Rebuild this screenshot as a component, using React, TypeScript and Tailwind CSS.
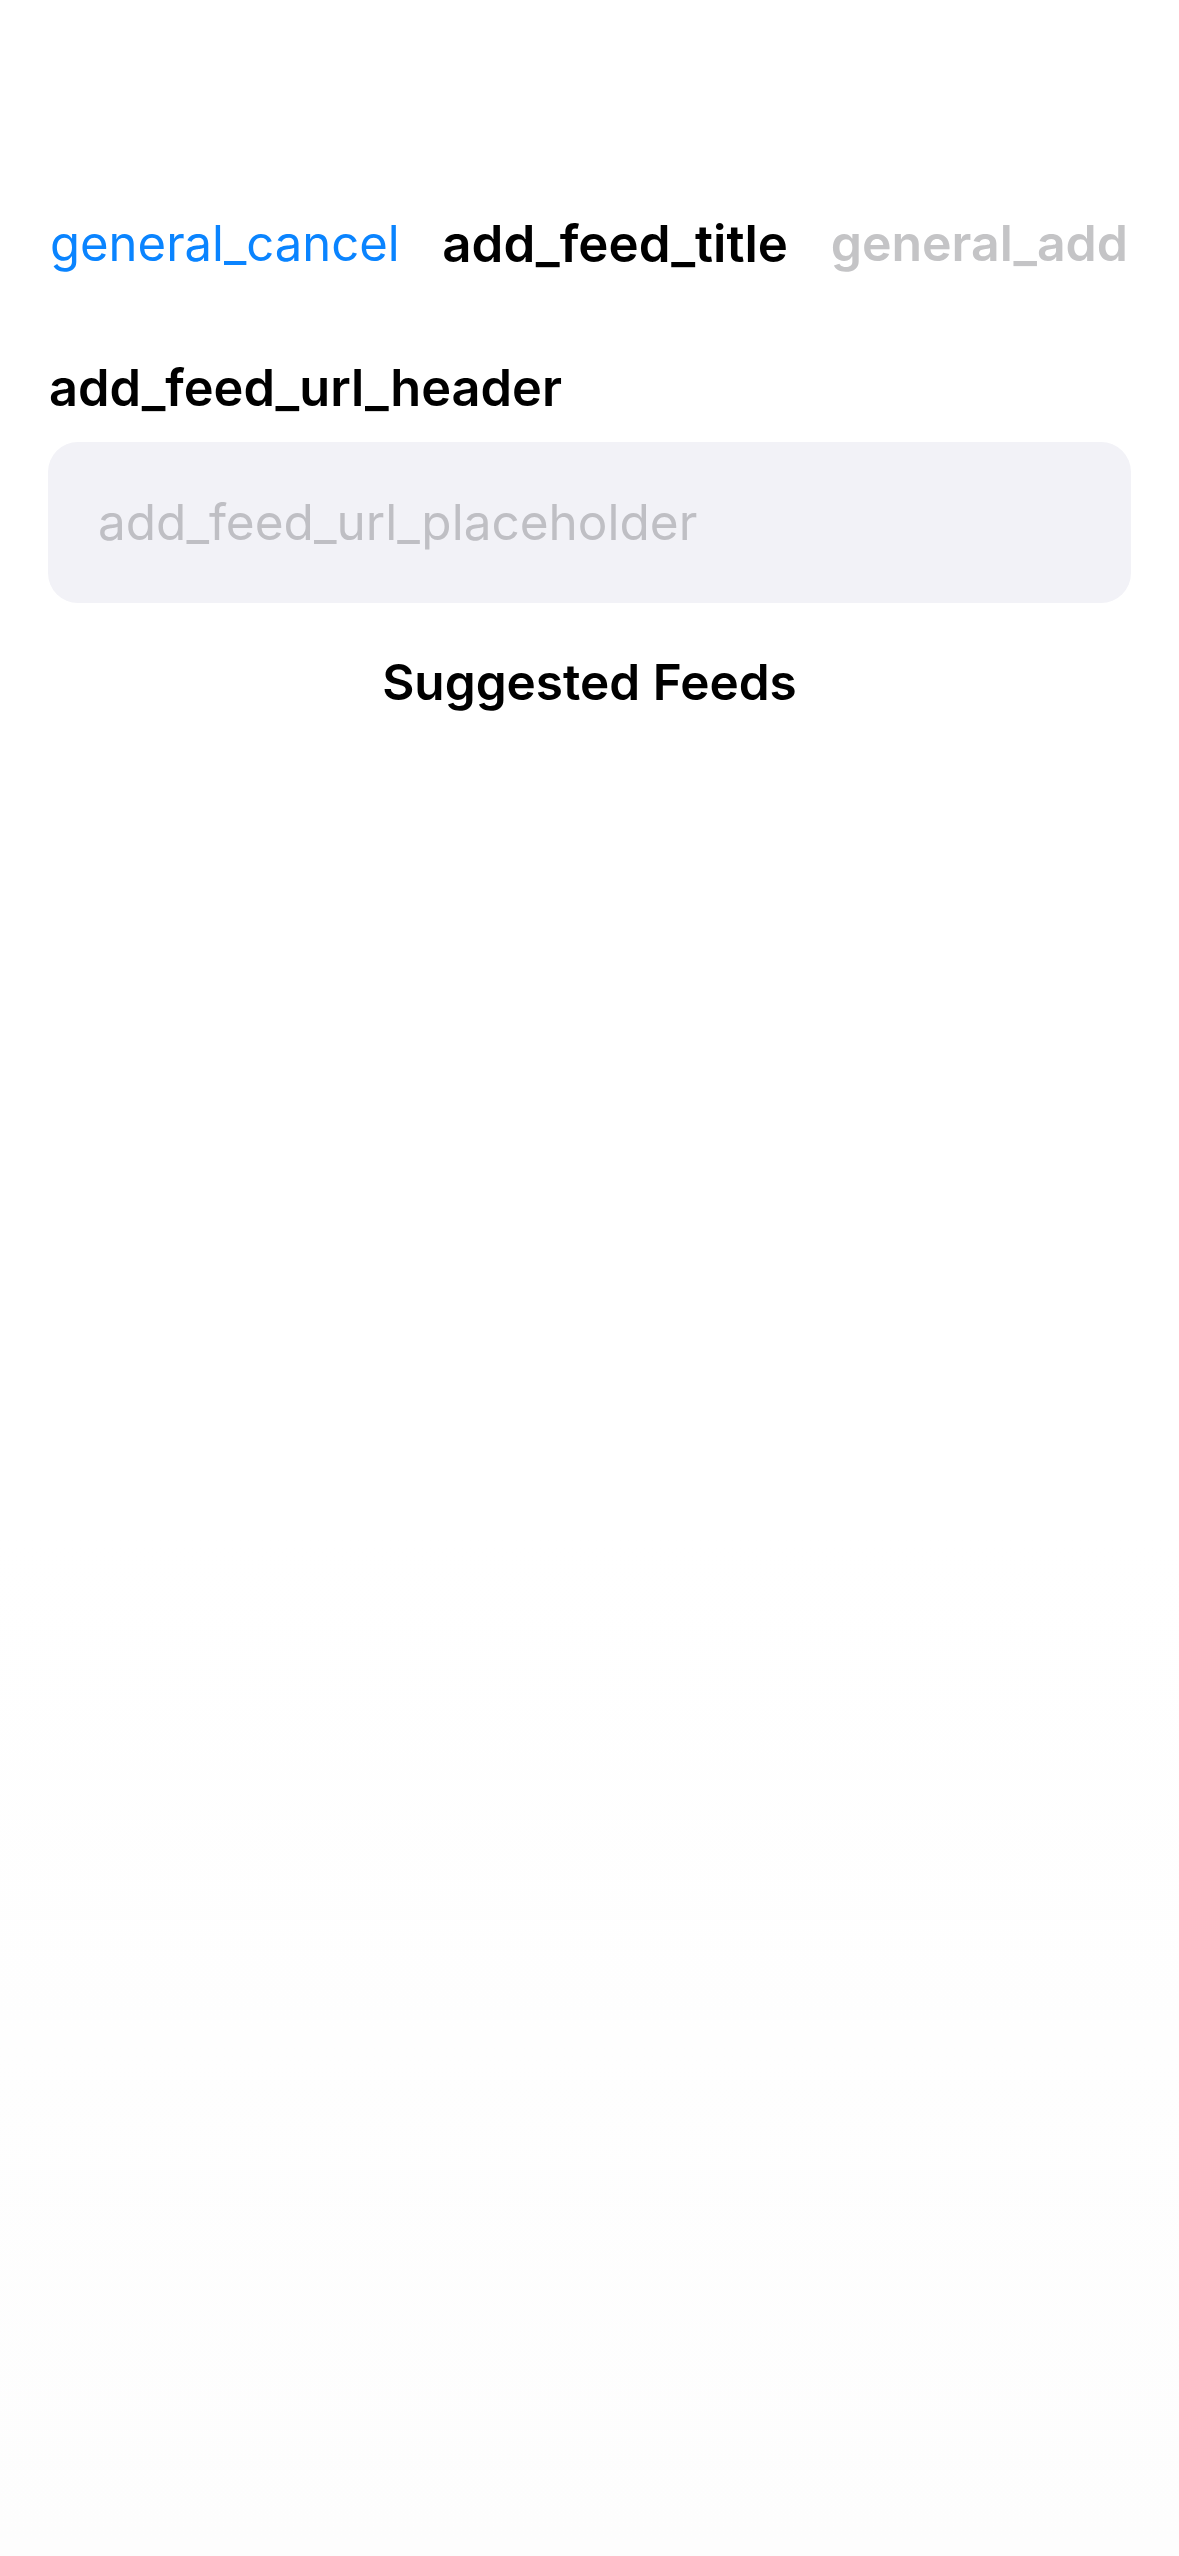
import React from "react";

const font = { fontFamily: "Inter, 'Noto Sans', sans-serif" };

export default function App() {
  return (
    <div
      style={font}
      className="min-h-[2556px] w-full bg-gradient-to-b from-white from-60% to-[#fdfdfd] pt-[177px] antialiased"
    >
      {/* Nav bar */}
      <div className="flex h-[132px] items-center justify-between pl-[50px] pr-[51px]">
        <button className="text-[49px] leading-none text-[#0a84ff]">general_cancel</button>
        <h1 className="text-[51px] font-semibold leading-none text-black">add_feed_title</h1>
        <button disabled className="text-[50px] font-semibold leading-none text-[#c4c4c6]">
          general_add
        </button>
      </div>

      {/* URL section */}
      <div className="px-[48px]">
        <div className="mt-[48px] h-[61px] pl-[1px] text-[50.5px] font-semibold leading-[61px] text-black">
          add_feed_url_header
        </div>
        <div className="mt-[24px] flex h-[161px] items-center rounded-[30px] bg-[#f2f2f7] pl-[50px]">
          <input
            className="w-full bg-transparent text-[49.5px] text-black outline-none placeholder:text-[#bfbfc4]"
            placeholder="add_feed_url_placeholder"
          />
        </div>
      </div>

      <h2 className="mt-[49px] text-center text-[49.5px] font-semibold leading-[61px] text-black">
        Suggested Feeds
      </h2>
    </div>
  );
}
